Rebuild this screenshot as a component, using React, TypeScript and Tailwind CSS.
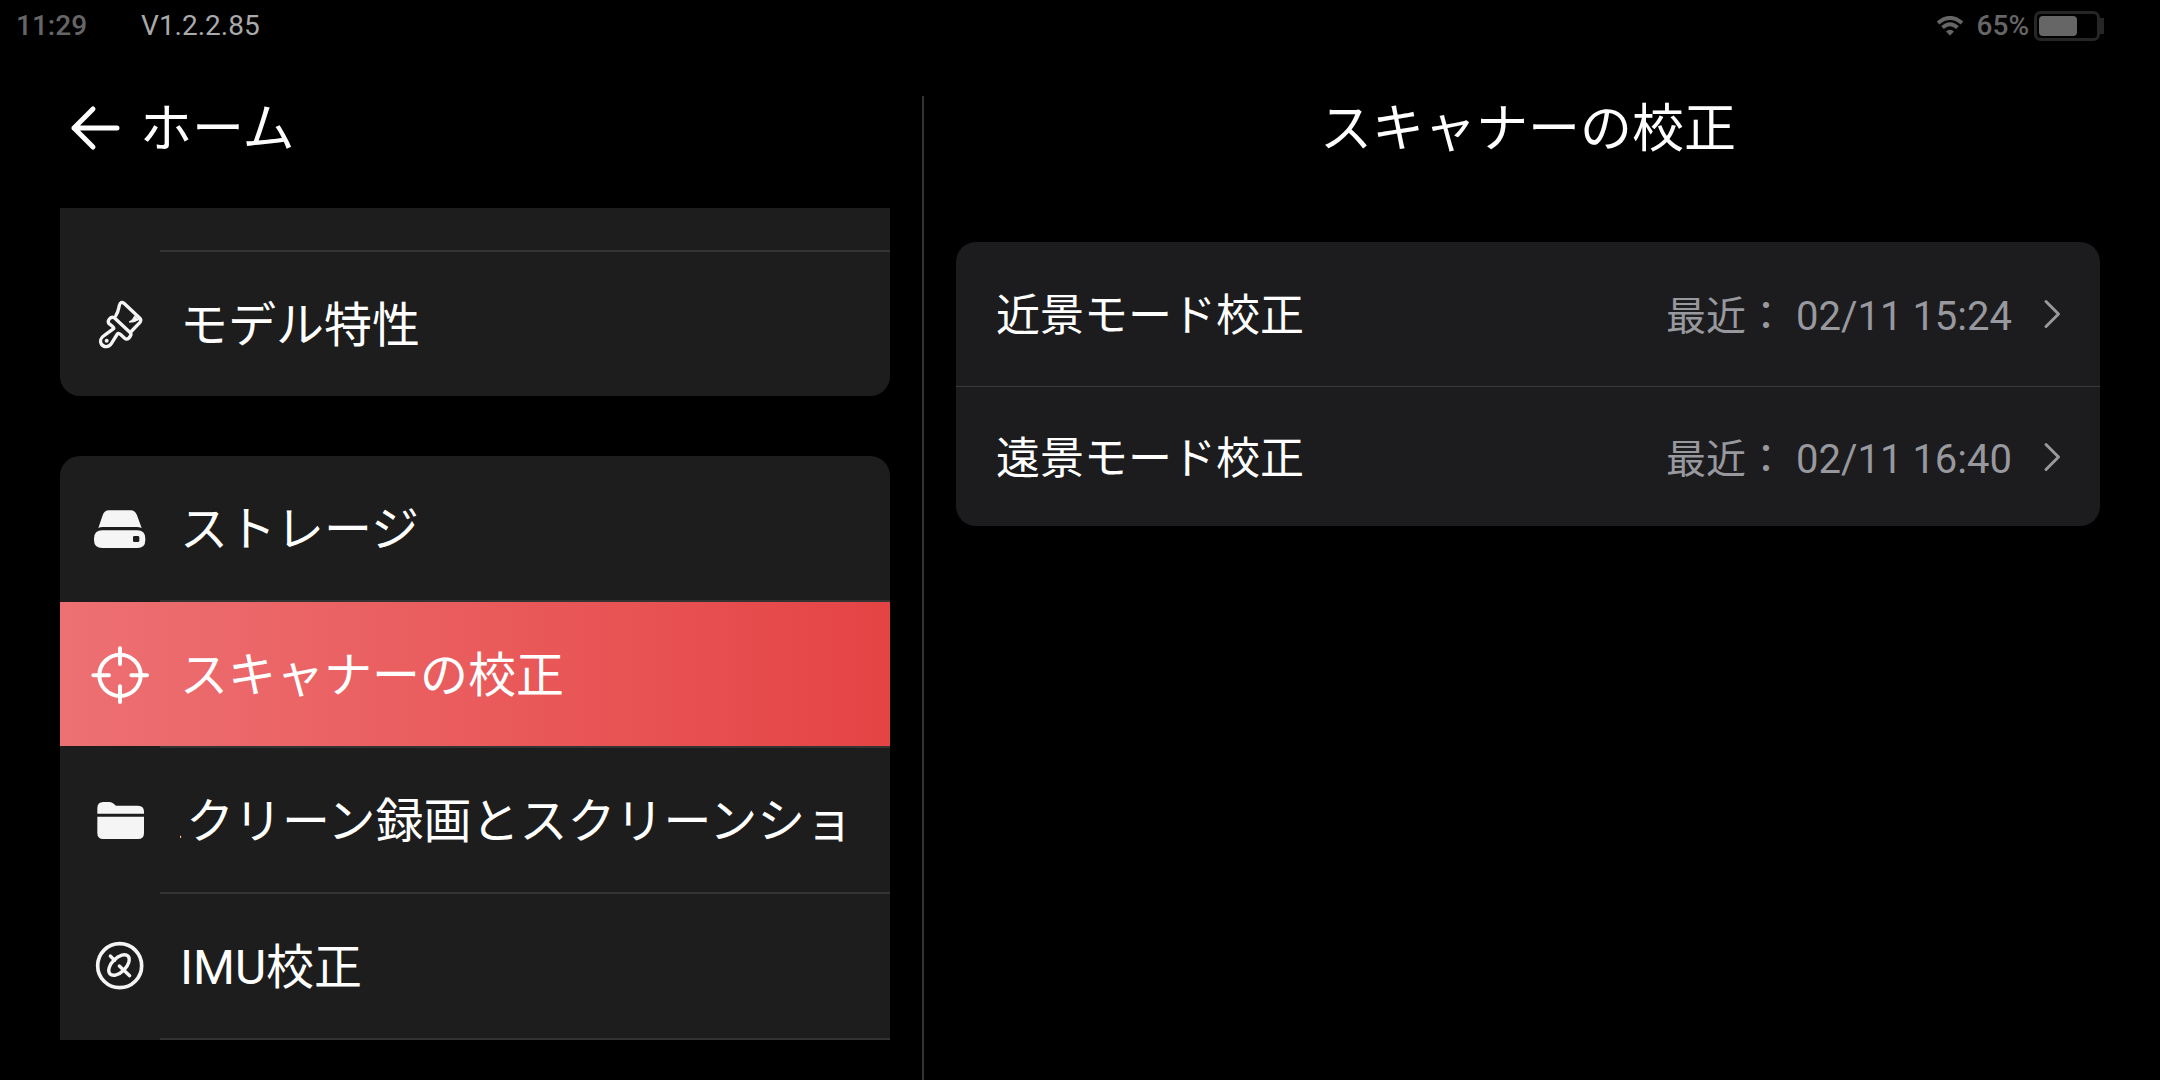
import type { ReactNode } from 'react';
import { useState } from 'react';

type MenuItem = { id: string; label: string; icon: ReactNode; marquee?: boolean };

function BrushIcon() {
  return (
    <svg viewBox="30 42 180 180" className="size-15" fill="none" stroke="#f5f5f5" strokeWidth="10" strokeLinecap="round" strokeLinejoin="round">
      <path d="M107 108 C115 95 115 90 118 76 Q122 62 132 70 L179 114 Q185 120 180 127 L155 153" />
      <path d="M103 113 Q95 109 88 117 Q82 124 87 131 Q104 143 101 146 L73 166 C62 173 59 184 64 192 C71 203 87 202 94 191 L112 162 Q115 158 121 163 L134 175 Q140 180 147 174 L151 168 Q155 162 151 158 Z" />
      <path d="M164 108 Q158 122 147 126 Q160 129 176 119 Z" fill="#f5f5f5" strokeWidth="3" />
      <circle cx="80" cy="182" r="6" fill="#f5f5f5" stroke="none" />
    </svg>
  );
}

function StorageIcon() {
  return (
    <svg viewBox="150 174 180 180" className="size-15" fill="#f5f5f5">
      <path d="M175 264 L188 226 Q193 211 207 211 H272 Q285 211 291 226 L305 264 Q298 261 290 261 H188 Q180 261 175 264 Z" />
      <path
        fillRule="evenodd"
        d="M187 271 H291 Q316 271 316 296 V300 Q316 324 292 324 H187 Q162 324 162 300 V296 Q162 271 187 271 Z M283 288 Q279 288 279 292 V302 Q279 306 283 306 H293 Q298 306 298 302 V292 Q298 288 293 288 Z"
      />
    </svg>
  );
}

function TargetIcon() {
  return (
    <svg viewBox="150 612 180 180" className="size-15" fill="none" stroke="#fff" strokeWidth="12" strokeLinecap="round">
      <circle cx="240" cy="706" r="62" />
      <path d="M240 625 V672 M240 739 V786 M160 706 H207 M274 706 H321" />
    </svg>
  );
}

function FolderIcon() {
  return (
    <svg viewBox="150 180 180 180" className="size-15" fill="#f5f5f5">
      <path d="M172 251 V234 Q172 216 190 216 H208 Q216 216 221 221 L228 227 H294 Q312 227 312 245 V251 Z" />
      <path d="M172 260 H312 V309 Q312 327 294 327 H190 Q172 327 172 309 Z" />
    </svg>
  );
}

function ImuIcon() {
  return (
    <svg viewBox="30 48 180 180" className="size-15" fill="none" stroke="#f5f5f5" strokeWidth="10" strokeLinecap="round">
      <circle cx="119" cy="137" r="66" strokeWidth="11" />
      <ellipse cx="117" cy="135" rx="38" ry="21" transform="rotate(-45 117 135)" />
      <path d="M91 108 L104 121 M118 138 L149 167" />
    </svg>
  );
}

const DISPLAY_ITEMS: MenuItem[] = [{ id: 'model', label: 'モデル特性', icon: <BrushIcon /> }];

const DEVICE_ITEMS: MenuItem[] = [
  { id: 'storage', label: 'ストレージ', icon: <StorageIcon /> },
  { id: 'scanner', label: 'スキャナーの校正', icon: <TargetIcon /> },
  { id: 'capture', label: 'スクリーン録画とスクリーンショット', icon: <FolderIcon />, marquee: true },
  { id: 'imu', label: 'IMU校正', icon: <ImuIcon /> },
];

const CALIBRATIONS = [
  { label: '近景モード校正', last: '02/11 15:24' },
  { label: '遠景モード校正', last: '02/11 16:40' },
];

function StatusBar() {
  return (
    <div className="flex h-13 shrink-0 items-center pr-14 pl-4 text-[28px] leading-8">
      <span className="font-medium text-[#666]">11:29</span>
      <span className="ml-[54px] text-[#aaa]">V1.2.2.85</span>
      <div className="ml-auto flex items-center text-[#666]">
        <svg viewBox="0 0 26 20" className="h-5 w-[26px]" fill="none" stroke="currentColor" strokeWidth="4">
          <path d="M1 7 Q13 -3 25 7" />
          <path d="M5.5 11.5 Q13 5 20.5 11.5" />
          <path d="M9 15.4 Q13 12 17 15.4 L13 19.4 Z" fill="currentColor" stroke="none" />
        </svg>
        <span className="ml-[14px] font-medium">65%</span>
        <svg viewBox="0 0 70 30" className="ml-[5px] h-[30px] w-[70px]">
          <rect x="1.5" y="1.5" width="63" height="27" rx="5" fill="none" stroke="#262626" strokeWidth="3" />
          <rect x="5" y="5" width="38" height="20" rx="4" fill="#666" />
          <rect x="66" y="7" width="4" height="16" fill="#262626" />
        </svg>
      </div>
    </div>
  );
}

function Divider() {
  return <div className="ml-25 h-0.5 bg-[#333]" />;
}

function MenuRow({ item, active, onSelect }: { item: MenuItem; active: boolean; onSelect: (id: string) => void }) {
  return (
    <button
      type="button"
      onClick={() => onSelect(item.id)}
      className={`flex h-36 w-full items-center gap-[30px] px-[30px] text-left text-5xl text-white ${
        active ? 'bg-linear-to-r from-[#ed7073] to-[#e54344]' : ''
      }`}
    >
      <span className="shrink-0">{item.icon}</span>
      <span className={`min-w-0 flex-1 overflow-hidden pt-1 leading-[72px] whitespace-nowrap ${item.marquee ? '-indent-[42px]' : ''}`}>
        {item.label}
      </span>
    </button>
  );
}

export default function App() {
  const [selected, setSelected] = useState('scanner');

  return (
    <div className="flex h-screen flex-col overflow-hidden bg-black font-[Roboto,'Noto_Sans_CJK_JP',sans-serif] text-white" lang="ja">
      <StatusBar />

      <main className="grid min-h-0 flex-1 grid-cols-[minmax(0,922fr)_2px_minmax(0,1236fr)]">
        <div className="flex min-h-0 flex-col pr-8 pb-10 pl-15">
          <header className="flex h-38 shrink-0 items-center">
            <button type="button" className="flex items-center gap-[18px] pl-2.5 text-[52px] leading-[76px]">
              <svg viewBox="0 0 52 48" className="h-12 w-[52px]" fill="none" stroke="#fff" strokeWidth="5" strokeLinecap="round" strokeLinejoin="round">
                <path d="M23 5 L4 24 L23 43 M4 24 H47" />
              </svg>
              <span className="pt-1">ホーム</span>
            </button>
          </header>

          <nav className="mt-1 min-h-0 flex-1 overflow-hidden">
            <div className="rounded-b-[20px] bg-[#1d1d1d]">
              <div className="h-[42px]" />
              <Divider />
              {DISPLAY_ITEMS.map((item) => (
                <MenuRow key={item.id} item={item} active={item.id === selected} onSelect={setSelected} />
              ))}
            </div>

            <ul className="mt-15 rounded-t-[20px] bg-[#1d1d1d]">
              {DEVICE_ITEMS.map((item) => (
                <li key={item.id}>
                  <MenuRow item={item} active={item.id === selected} onSelect={setSelected} />
                  <Divider />
                </li>
              ))}
            </ul>
          </nav>
        </div>

        <div className="mt-11 bg-[#333]" />

        <section className="pr-15 pl-8">
          <header className="flex h-38 items-center justify-center">
            <h1 className="pt-1 text-[52px] leading-[76px]">スキャナーの校正</h1>
          </header>

          <div className="mt-[38px] divide-y divide-[#3a3a3c] rounded-[20px] bg-[#1c1c1e]">
            {CALIBRATIONS.map((c) => (
              <button key={c.label} type="button" className="flex h-[139px] w-full items-center pr-[38px] pl-10 text-left first:h-[145px]">
                <span className="pt-1 text-[44px] leading-[64px]">{c.label}</span>
                <span className="ml-auto pt-1.5 text-[40px] leading-[60px] text-[#98989f]">最近： {c.last}</span>
                <svg viewBox="0 0 20 32" className="ml-[30px] h-8 w-5" fill="none" stroke="#999" strokeWidth="3" strokeLinecap="round" strokeLinejoin="round">
                  <path d="M4 3.5 L16.5 16 L4 28.5" />
                </svg>
              </button>
            ))}
          </div>
        </section>
      </main>
    </div>
  );
}
